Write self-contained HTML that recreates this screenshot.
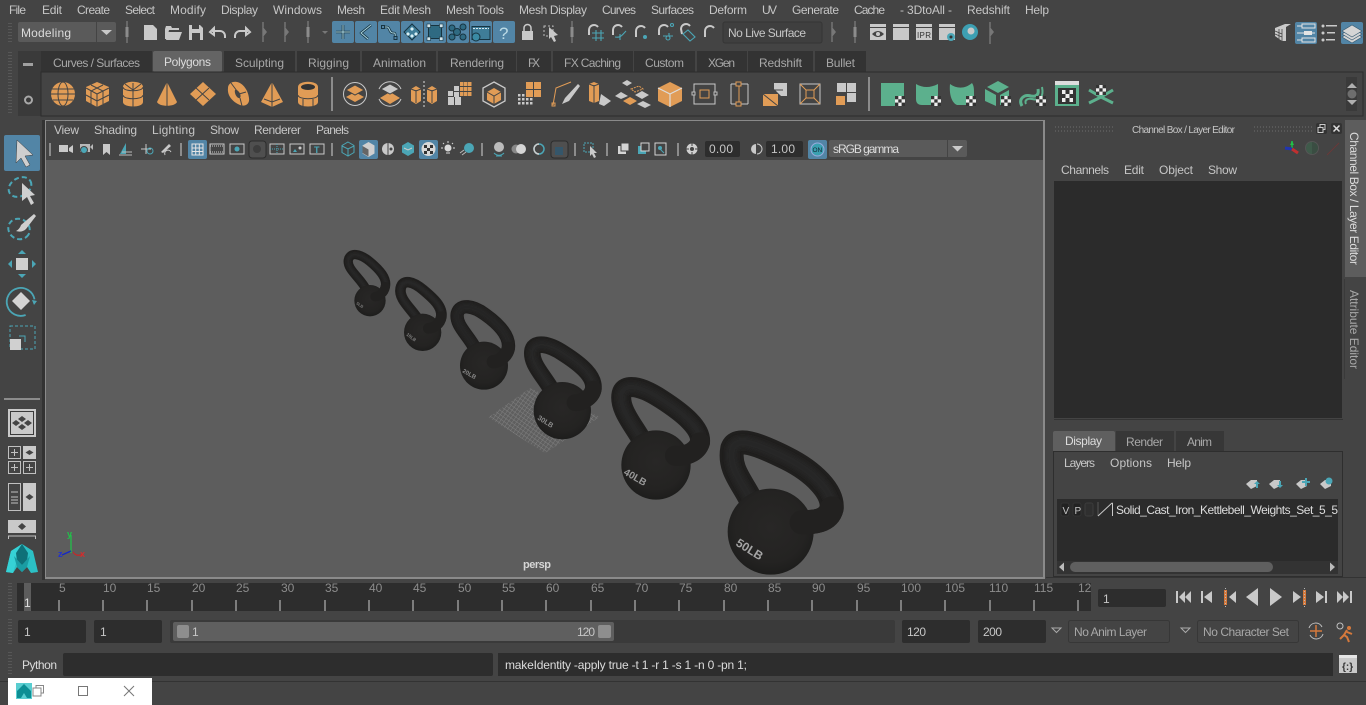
<!DOCTYPE html>
<html><head><meta charset="utf-8"><title>Maya</title>
<style>
html,body{margin:0;padding:0;background:#444;width:1366px;height:705px;overflow:hidden}
svg{display:block}
text{font-family:"Liberation Sans",sans-serif;font-size:12px;fill:#c6c6c6;white-space:pre}
.d{fill:#a8a8a8}
.w{fill:#dcdcdc}
.t{font-size:12px;fill:#8c8c8c}
.o{fill:#e19c56}
.g{fill:#5cb08d}
.l{fill:#c9c9c9}
.ln{fill:none;stroke:#c9c9c9;stroke-width:1.3}
.lo{fill:none;stroke:#444;stroke-width:1}
.b{fill:#5285a6}
.f{fill:#2d2d2d}
</style></head><body>
<svg width="1366" height="705" viewBox="0 0 1366 705" xmlns="http://www.w3.org/2000/svg">
<defs>
<radialGradient id="ball" cx="0.5" cy="0.45" r="0.58"><stop offset="0" stop-color="#282726"/><stop offset="0.7" stop-color="#242322"/><stop offset="1" stop-color="#1c1c1b"/></radialGradient>
<filter id="soft" x="-20%" y="-20%" width="140%" height="140%"><feGaussianBlur stdDeviation="6"/></filter>
<filter id="soft2" x="-30%" y="-30%" width="160%" height="160%"><feGaussianBlur stdDeviation="3"/></filter>
<pattern id="mesh" width="3.500" height="3.500" patternUnits="userSpaceOnUse" patternTransform="rotate(35)"><rect width="3.500" height="3.500" fill="#5f5f5f"/><path d="M0 0H3.500M0 0V3.500" stroke="#7e7e7e" stroke-width="1" fill="none"/></pattern>
<g id="chk"><rect width="10" height="10" fill="#eee"/><rect width="3.3" height="3.3" fill="#333"/><rect x="6.6" width="3.4" height="3.3" fill="#333"/><rect x="3.3" y="3.3" width="3.3" height="3.3" fill="#333"/><rect y="6.6" width="3.3" height="3.4" fill="#333"/><rect x="6.6" y="6.6" width="3.4" height="3.4" fill="#333"/></g>
<g id="grip"><path d="M0 0V22" stroke="#8c8c8c" stroke-width="1"/><rect x="-1.500" y="6" width="3" height="10" fill="#8c8c8c"/></g>
</defs>

<rect width="1366" height="705" fill="#444"/>

<!-- MENU -->
<text x="9" y="14" textLength="17">File</text><text x="42" y="14" textLength="20">Edit</text><text x="77" y="14" textLength="33">Create</text><text x="125" y="14" textLength="30">Select</text><text x="170" y="14" textLength="36">Modify</text><text x="221" y="14" textLength="37">Display</text><text x="273" y="14" textLength="49">Windows</text><text x="337" y="14" textLength="28">Mesh</text><text x="380" y="14" textLength="51">Edit Mesh</text><text x="446" y="14" textLength="58">Mesh Tools</text><text x="519" y="14" textLength="68">Mesh Display</text><text x="602" y="14" textLength="34">Curves</text><text x="651" y="14" textLength="43">Surfaces</text><text x="709" y="14" textLength="38">Deform</text><text x="762" y="14" textLength="15">UV</text><text x="792" y="14" textLength="47">Generate</text><text x="854" y="14" textLength="31">Cache</text><text x="900" y="14" textLength="52">- 3DtoAll -</text><text x="967" y="14" textLength="43">Redshift</text><text x="1025" y="14" textLength="24">Help</text>

<!-- STATUS LINE -->
<path d="M9 23V42M11 23V42" stroke="#6a6a6a" stroke-dasharray="1 2"/>
<rect x="18" y="22" width="98" height="20" rx="2" fill="#5a5a5a"/><rect x="96" y="22" width="1" height="20" fill="#444"/>
<text x="21" y="37" textLength="50" class="w">Modeling</text>
<path d="M101 30h11l-5.500 5z" fill="#c9c9c9"/>
<use href="#grip" x="127" y="21"/>
<path class="l" d="M144 25h9l4 4v11h-13z"/>
<path class="l" d="M165 39v-10l1-3h5l1 2h7v2h-10l-2 9z"/><path class="l" d="M168 32h14l-3 8h-13z"/>
<path class="l" d="M189 25h11l3 3v12h-14z"/><rect x="192" y="25" width="7" height="4" fill="#444"/><rect x="192" y="33" width="8" height="7" fill="#444"/>
<path d="M214 28l-4 4 4 3zM212 31h8a5 5 0 0 1 5 5v2" fill="none" stroke="#c9c9c9" stroke-width="2"/>
<path d="M246 28l4 4-4 3zM248 31h-8a5 5 0 0 0-5 5v2" fill="none" stroke="#c9c9c9" stroke-width="2"/>
<path d="M263 22V42" stroke="#8c8c8c"/><path d="M263 27l4 5-4 5z" fill="#777"/>
<path d="M285 22V42" stroke="#8c8c8c"/><path d="M285 27l4 5-4 5z" fill="#777"/>
<use href="#grip" x="308" y="21"/>
<path d="M322 31h6l-3 3z" fill="#777"/>
<!-- blue selection -->
<g class="b"><rect x="332" y="21" width="22" height="22" rx="2"/><rect x="355" y="21" width="22" height="22" rx="2"/><rect x="378" y="21" width="22" height="22" rx="2"/><rect x="401" y="21" width="22" height="22" rx="2"/><rect x="424" y="21" width="22" height="22" rx="2"/><rect x="447" y="21" width="22" height="22" rx="2"/><rect x="470" y="21" width="22" height="22" rx="2"/><rect x="493" y="21" width="22" height="22" rx="2"/></g>
<g fill="none" stroke="#173441" stroke-width="2.600" stroke-linejoin="round">
<path d="M343 25V39M336 32H350"/><path d="M371 25L361 33L368 39"/><path d="M384 27h3c3 0 2 6 6 6h1c2 0 1 4 1 4"/>
</g>
<g fill="none" stroke="#a8d4e0" stroke-width="1">
<path d="M343 25V39M336 32H350"/><path d="M371 25L361 33L368 39"/><path d="M384 27h3c3 0 2 6 6 6h1c2 0 1 4 1 4"/>
</g>
<g fill="#5285a6" stroke="#173441"><rect x="381.500" y="25.500" width="3" height="3"/><rect x="394" y="36.500" width="3" height="3"/></g>
<path d="M412 24l8 8-8 8-8-8z" fill="#3f7d98" stroke="#173441"/><path d="M412 27l2 2-2 2-2-2zM408 32l2 2-2 2-2-2zM416 32l2 2-2 2-2-2zM412 34l2 2-2 2-2-2z" fill="#d8f0f5"/>
<rect x="428.500" y="25.500" width="13" height="13" fill="#2f6a82" stroke="#173441"/><g fill="#d4e6ec" stroke="#173441" stroke-width=".6"><rect x="427" y="24" width="3.500" height="3.500"/><rect x="439.500" y="24" width="3.500" height="3.500"/><rect x="427" y="37" width="3.500" height="3.500"/><rect x="439.500" y="37" width="3.500" height="3.500"/></g>
<g fill="#2f6a82" stroke="#173441"><circle cx="452" cy="28" r="3"/><circle cx="463" cy="27" r="3"/><circle cx="457" cy="32" r="3.500"/><circle cx="452" cy="37" r="3"/><circle cx="463" cy="37" r="3"/></g>
<rect x="472" y="26.500" width="18" height="13" fill="#3f7d98" stroke="#173441"/><path d="M473 28.500h16" stroke="#d8e8ee" stroke-dasharray="2 1"/><circle cx="476" cy="37" r="4" fill="#3a8aa4" stroke="#173441"/>
<text x="499" y="39" style="font-size:17px;fill:#bcdbe6">?</text>
<path class="l" d="M522 31h11v9h-11z"/><path d="M524 31v-3a3.500 3.500 0 0 1 7 0v3" fill="none" stroke="#c9c9c9" stroke-width="1.500"/>
<path d="M544 26h9v10h-9z" fill="none" stroke="#bbb" stroke-dasharray="2 2"/><path d="M549 27l9 8-4 1 2 5-2 1-3-5-2 2z" fill="#c9c9c9"/>
<use href="#grip" x="572" y="21"/>
<!-- snap -->
<g fill="none" stroke="#c9c9c9" stroke-width="2"><path d="M589 35v-5a5 5 0 0 1 9-3"/><path d="M613 35v-5a5 5 0 0 1 9-3"/><path d="M636 37v-6a5 5 0 0 1 9-3"/><path d="M659 35v-5a5 5 0 0 1 9-3"/><path d="M682 34l-1-5a5 5 0 0 1 9-3"/><path d="M705 37v-6a5 5 0 0 1 9-3"/></g>
<g fill="none" stroke="#4ba6b6" stroke-width="1.100"><path d="M596 30v11M601 30v11M592 33h12M592 38h12"/><path d="M615 37c6 1 7-2 11-6M620 34v6"/><path d="M669 33v3M663 36h10"/><circle cx="668" cy="38" r="2"/><circle cx="672" cy="25" r="1.500"/><path d="M688 30l7 7-5 4-7-7z"/></g>
<circle cx="645" cy="37" r="2" fill="#4ba6b6"/>
<rect x="723" y="22" width="99" height="21" rx="2" fill="#3f3f3f" stroke="#353535"/>
<text x="728" y="37" textLength="78">No Live Surface</text>
<path d="M832 22V42" stroke="#8c8c8c"/><path d="M832 27l4 5-4 5z" fill="#777"/>
<use href="#grip" x="855" y="21"/>
<g class="l"><path d="M870 24h16v3h-16z"/><rect x="870" y="28" width="16" height="12"/><rect x="893" y="28" width="16" height="12"/><path d="M893 24h16v3h-16z"/><rect x="916" y="28" width="16" height="12"/><path d="M916 24h16v3h-16z"/><rect x="939" y="28" width="16" height="12"/><path d="M939 24h16v3h-16z"/></g>
<path d="M872 34q6-6 12 0q-6 6-12 0z" fill="#444"/><circle cx="878" cy="34" r="2" fill="#c9c9c9"/>
<text x="917" y="38" style="font-size:8px;fill:#333" textLength="14">IPR</text>
<circle cx="951" cy="37" r="4" fill="#4ba6b6"/><circle cx="951" cy="37" r="1.500" fill="#333"/>
<circle cx="970" cy="32" r="8" fill="#3d9fb2"/><circle cx="971" cy="31" r="3.500" fill="#c8c8c8"/>
<path d="M990 22V44" stroke="#8c8c8c"/><path d="M990 27l4 5-4 5z" fill="#777"/>
<!-- workspace -->
<path class="l" d="M1275 28l10-4 6 0-5 3v14l-4 0-7-5z"/><path d="M1275 31l7 3M1275 34l7 3M1279 29v10M1282 29v12" stroke="#444" stroke-width=".8"/>
<rect x="1295" y="22" width="22" height="22" rx="2" fill="#5285a6"/>
<g fill="none" stroke="#e4e4e4"><rect x="1302" y="24" width="13" height="4"/><rect x="1302" y="38" width="13" height="4"/><path d="M1297 26h5M1297 33h18M1297 40h5"/></g><rect x="1304" y="31" width="8" height="4" fill="#e4e4e4"/>
<g class="l"><circle cx="1323" cy="26" r="1.500"/><circle cx="1323" cy="33" r="1.500"/><circle cx="1323" cy="40" r="1.500"/><path d="M1326 25h11v1.500h-11zM1327 32h8v1.500h-8zM1326 39h9v1.500h-9z"/></g>
<rect x="1341" y="22" width="22" height="22" rx="2" fill="#5285a6"/>
<g fill="#d5d5d5" stroke="#395c73" stroke-width=".7"><path d="M1352 31l10 6-10 6-10-6z"/><path d="M1352 28l10 6-10 6-10-6z"/><path d="M1352 25l10 6-10 6-10-6z"/></g>

<!-- SHELF -->
<path d="M9 52V115M11 52V115" stroke="#6a6a6a" stroke-dasharray="1 2"/>
<rect x="18" y="51" width="23" height="65" fill="#3a3a3a"/>
<rect x="23" y="63" width="10" height="3" fill="#a0a0a0"/>
<circle cx="28.500" cy="100" r="3.500" fill="none" stroke="#a8a8a8" stroke-width="2"/>
<g fill="#333"><rect x="41" y="51" width="111" height="21"/><rect x="224" y="51" width="71" height="21"/><rect x="297" y="51" width="63" height="21"/><rect x="362" y="51" width="74" height="21"/><rect x="438" y="51" width="78" height="21"/><rect x="517" y="51" width="34" height="21"/><rect x="553" y="51" width="80" height="21"/><rect x="634" y="51" width="61" height="21"/><rect x="697" y="51" width="50" height="21"/><rect x="748" y="51" width="65" height="21"/><rect x="815" y="51" width="51" height="21"/></g>
<rect x="153" y="51" width="69" height="21" rx="2" fill="#646464"/>
<rect x="41" y="72" width="1322" height="44" fill="#444" stroke="#2c2c2c"/>
<text class="d" x="53" y="67" textLength="87">Curves / Surfaces</text><text class="w" x="164" y="66" textLength="47">Polygons</text><text class="d" x="235" y="67" textLength="49">Sculpting</text><text class="d" x="308" y="67" textLength="41">Rigging</text><text class="d" x="373" y="67" textLength="53">Animation</text><text class="d" x="450" y="67" textLength="54">Rendering</text><text class="d" x="528" y="67" textLength="12">FX</text><text class="d" x="564" y="67" textLength="57">FX Caching</text><text class="d" x="645" y="67" textLength="39">Custom</text><text class="d" x="708" y="67" textLength="27">XGen</text><text class="d" x="759" y="67" textLength="43">Redshift</text><text class="d" x="826" y="67" textLength="29">Bullet</text>

<!-- shelf icons -->
<circle class="o" cx="63" cy="94" r="12"/><g class="lo"><ellipse cx="63" cy="94" rx="5" ry="12"/><path d="M52 89h22M51 94h24M53 100h20"/></g>
<path class="o" d="M97 82l12 5v14l-12 6-11-6V87z"/><path class="lo" d="M86 88l11 6 12-6M97 94v13M91 85l12 6v13M103 85l-12 6v13M86 95l11 6 12-6"/>
<path class="o" d="M123 87c0-7 20-7 20 0v15c0 6-20 6-20 0z"/><path class="lo" d="M123 87c0 5 20 5 20 0M123 95c0 5 20 5 20 0M133 90V107M133 83v7M125 84l8 6 8-6"/>
<path class="o" d="M167 82l10 20c-2 5-18 5-20 0z"/><path class="lo" d="M167 82v25"/>
<path class="o" d="M203 82l13 12-13 12-13-12z"/><path class="lo" d="M196 88l13 12M209 88l-13 12" stroke-width="1.500"/>
<path class="o" d="M233 82c7-2 15 6 16 16 1 6-4 9-9 7-7-3-13-9-12-17 0-3 2-5 5-6z"/><path d="M235 90c3-1 7 5 5 8-3 1-6-5-5-8z" fill="#444"/><path class="lo" d="M231 83l6 8M246 92l-7 2M240 98l2 8"/>
<path class="o" d="M272 82l11 20-11 5-11-5z"/><path class="lo" d="M272 82v25M264 99l8 3 8-3"/>
<path class="o" d="M298 87c0-7 20-7 20 0v15c0 6-20 6-20 0z"/><ellipse cx="308" cy="87" rx="7" ry="3" fill="#333"/><path class="lo" d="M298 95c0 5 20 5 20 0M303 99v7M313 99v7"/>
<rect x="331" y="77" width="2" height="34" fill="#8c8c8c"/>
<circle cx="355" cy="94" r="11.500" fill="none" stroke="#c9c9c9"/><path class="o" d="M355 92l9 5-9 5-9-5z"/><path class="o" d="M355 85l9 5-9 5-9-5z" stroke="#444"/>
<path d="M379 89a12 12 0 0 1 22 0M379 99a12 12 0 0 0 22 0" fill="none" stroke="#c9c9c9"/><path class="o" d="M390 92l10 6-10 6-10-6z"/><path class="l" d="M390 84l9 5-9 5-9-5z" stroke="#444"/>
<path class="o" d="M411 89l5-3 5 3v12l-5 3-5-3zM427 89l5-3 5 3v12l-5 3-5-3z"/><path class="lo" d="M416 90v13M432 90v13M411 89l5 2 5-2M427 89l5 2 5-2"/><path d="M424 81V107" stroke="#ddd" stroke-dasharray="2 2"/>
<g class="o"><rect x="460" y="82" width="3.500" height="4"/><rect x="464" y="82" width="3.500" height="4"/><rect x="468" y="82" width="3.500" height="4"/><rect x="460" y="87" width="3.500" height="4"/><rect x="464" y="87" width="3.500" height="4"/><rect x="468" y="87" width="3.500" height="4"/><rect x="460" y="92" width="3.500" height="4"/><rect x="464" y="92" width="3.500" height="4"/><rect x="468" y="92" width="3.500" height="4"/></g><rect x="454" y="86" width="5" height="5" class="l"/><rect x="448" y="91" width="5" height="5" class="l"/><rect x="454" y="92" width="5" height="5" class="l"/><rect x="448" y="97" width="6" height="8" class="l"/><rect x="455" y="97" width="6" height="8" class="l"/>
<path class="ln" d="M494 82l11 6v13l-11 6-11-6V88z"/><path class="o" d="M494 88l7 4v8l-7 4-7-4v-8z"/><path class="lo" d="M487 92l7 4 7-4M494 96v8"/>
<g class="o"><rect x="526" y="82" width="7" height="7"/><rect x="534" y="82" width="7" height="7"/><rect x="526" y="90" width="7" height="7"/><rect x="534" y="90" width="7" height="7"/></g><g class="l"><rect x="518" y="94" width="2.500" height="2.500"/><rect x="522" y="94" width="2.500" height="2.500"/><rect x="518" y="98" width="2.500" height="2.500"/><rect x="522" y="98" width="2.500" height="2.500"/><rect x="518" y="102" width="2.500" height="2.500"/><rect x="522" y="102" width="2.500" height="2.500"/><rect x="526" y="98" width="2.500" height="2.500"/><rect x="530" y="98" width="2.500" height="2.500"/><rect x="526" y="102" width="2.500" height="2.500"/><rect x="530" y="102" width="2.500" height="2.500"/></g>
<path d="M553 105l3-17 15-6" fill="none" stroke="#e19c56"/><rect x="552" y="103" width="3" height="3" fill="none" stroke="#e19c56"/><path class="l" d="M578 84l-13 14-3 6 7-3 11-15z"/>
<path class="o" d="M589 84l5-2 5 2v17l-5 2-5-2z"/><path class="l" d="M601 94l10 7-7 5-5-2z"/><path class="lo" d="M594 85v18M589 84l5 2 5-2"/>
<g class="l"><path d="M627 80l5 3-5 3-5-3zM642 91l7 4-7 4-7-4zM643 101l8 4-6 3-8-4zM621 92l7 4-7 3-6-3z"/></g><path class="o" d="M630 97l7 4-7 4-7-4z"/><path d="M631 89l8-3 4 3-8 3z" fill="none" stroke="#e19c56" stroke-dasharray="2 1"/>
<path class="o" d="M670 82l12 6v13l-12 6-12-6V88z"/><path d="M658 88l12 6 12-6M670 94v13" fill="none" stroke="#ddd" stroke-width="1.200"/>
<rect x="694" y="84" width="21" height="20" fill="none" stroke="#c9c9c9"/><rect x="700" y="90" width="9" height="8" fill="#444" stroke="#e19c56"/><rect x="692" y="92" width="3" height="3" fill="#444" stroke="#bbb"/><rect x="714" y="92" width="3" height="3" fill="#444" stroke="#bbb"/>
<path d="M731 84h17M731 104h17M731 84v20M748 84v20" fill="none" stroke="#c9c9c9"/><path d="M739 84v20" stroke="#e19c56"/><rect x="736" y="82" width="5" height="4" fill="#444" stroke="#e19c56"/><rect x="736" y="102" width="5" height="4" fill="#444" stroke="#e19c56"/>
<path class="l" d="M774 83h13v13h-6l-7-7z"/><path class="o" d="M763 94h15v12h-15z"/><path d="M763 94l15 12M774 90l9 0" stroke="#444"/>
<rect x="800" y="84" width="20" height="20" fill="none" stroke="#c9c9c9"/><path d="M800 84l20 20M820 84l-20 20" stroke="#e19c56"/><rect x="806" y="90" width="8" height="8" fill="#444" stroke="#e19c56"/>
<rect x="837" y="83" width="9" height="9" class="l"/><rect x="847" y="83" width="9" height="9" class="l"/><rect x="847" y="93" width="9" height="9" class="l"/><rect x="836" y="96" width="9" height="9" class="o"/>
<rect x="868" y="77" width="2" height="34" fill="#8c8c8c"/>
<!-- green -->
<rect class="g" x="881" y="83" width="23" height="23"/><use href="#chk" x="895" y="96"/>
<path class="g" d="M916 84c7 4 14 4 22 0v21h-16c-4 0-6-2-6-6z"/><use href="#chk" x="931" y="96"/>
<path class="g" d="M950 84c7 5 15 5 22-1 2 3 2 6 2 10v12h-17c-5-2-8-10-7-21z"/><use href="#chk" x="966" y="96"/>
<path class="g" d="M998 81l11 6-11 6-11-6zM985 89l11 6v11l-11-5zM1000 95l9-5v8h-5v7h-4z"/><use href="#chk" x="1001" y="96"/>
<path d="M1022 106c-4-7 2-12 9-10 6 1 8-2 7-7" fill="none" stroke="#5cb08d" stroke-width="3"/><path d="M1026 104c-2-4 2-6 6-5 8 2 12-2 10-12" fill="none" stroke="#5cb08d" stroke-width="2"/><use href="#chk" x="1036" y="96"/>
<rect x="1055" y="81" width="24" height="25" fill="#5cb08d"/><rect x="1055" y="81" width="24" height="4" fill="#ddd"/><rect x="1058" y="88" width="18" height="16" fill="#333"/><rect x="1062" y="90" width="11" height="12" fill="#eee"/><rect x="1065.500" y="90" width="4" height="4" fill="#333"/><rect x="1062" y="94" width="3.500" height="4" fill="#333"/><rect x="1069.500" y="94" width="3.500" height="4" fill="#333"/><rect x="1065.500" y="98" width="4" height="4" fill="#333"/>
<path d="M1089 90l12 7 12-7M1089 103l12-6 12 6" fill="none" stroke="#5cb08d" stroke-width="3"/><use href="#chk" x="1096" y="85"/>
<!-- shelf scroll -->
<rect x="1346" y="77" width="11" height="34" fill="#3a3a3a"/><path d="M1347 88l5-5 5 5z" fill="#b0b0b0"/><circle cx="1352" cy="94" r="4.500" fill="#6e6e6e"/><path d="M1347 100l5 5 5-5z" fill="#b0b0b0"/>

<!-- LEFT TOOLBOX -->
<rect x="42" y="120" width="3" height="460" fill="#333"/>
<rect x="4" y="135" width="36" height="36" rx="2" fill="#5285a6"/>
<path d="M17 140l16 15-8 1 5 9-4 2-5-9-5 5z" fill="#cfcfcf" stroke="#3a3a3a" stroke-width=".5"/>
<ellipse cx="20" cy="187" rx="12" ry="9" fill="none" stroke="#4ba6b6" stroke-width="2" stroke-dasharray="5 3" transform="rotate(-30 20 187)"/><path d="M22 183l13 12-5 1 4 7-3 2-4-8-5 4z" fill="#cfcfcf"/>
<ellipse cx="19" cy="229" rx="11" ry="10" fill="none" stroke="#4ba6b6" stroke-width="2" stroke-dasharray="5 3" transform="rotate(30 19 229)"/><path d="M34 214l2 2-10 13c-3 3-7 3-10 2 2-1 4-3 5-6z" fill="#cfcfcf"/>
<rect x="16" y="258" width="12" height="12" fill="#cfcfcf"/><path d="M22 250l4 4h-8zM22 278l-4-4h8zM8 264l4-4v8zM36 264l-4-4v8z" fill="#4ba6b6"/>
<path d="M34 297a14 14 0 1 0-6 17" fill="none" stroke="#4ba6b6" stroke-width="1.800" transform="rotate(10 21 301)"/><path d="M21 292l9 9-9 9-9-9z" fill="#d4d4d4"/><path d="M32 300l5 1-3 4z" fill="#4ba6b6"/>
<rect x="10" y="326" width="25" height="23" fill="none" stroke="#4ba6b6" stroke-dasharray="3 2"/><rect x="10" y="339" width="11" height="11" fill="#d0d0d0"/><path d="M19 336h6v6" fill="none" stroke="#4ba6b6"/>
<rect x="4" y="398" width="36" height="2" fill="#8c8c8c"/>
<rect x="8" y="409" width="28" height="28" fill="#c9c9c9"/><rect x="10.500" y="411.500" width="23" height="23" fill="none" stroke="#3a3a3a"/><path d="M22 416l4 3-4 3-4-3zM16 420l4 3-4 3-4-3zM28 420l4 3-4 3-4-3zM22 424l4 3-4 3-4-3z" fill="#444"/>
<g fill="none" stroke="#c0c0c0"><rect x="8.500" y="446.500" width="12" height="12"/><rect x="8.500" y="461.500" width="12" height="12"/><rect x="23.500" y="461.500" width="12" height="12"/><path d="M14.500 449v7M11 452.500h7M14.500 464v7M11 467.500h7M29.500 464v7M26 467.500h7"/></g><rect x="23" y="446" width="13" height="13" fill="#c9c9c9"/><path d="M29.500 450l4 2.500-4 2.500-4-2.500z" fill="#444"/>
<rect x="8.500" y="483.500" width="12" height="27" fill="none" stroke="#c0c0c0"/><path d="M11 492h7M11 497h7M11 500h7M11 503h7" stroke="#c0c0c0"/><rect x="23" y="483" width="13" height="28" fill="#c9c9c9"/><path d="M29.500 494l4 3-4 3-4-3z" fill="#444"/>
<rect x="8" y="520" width="28" height="13" fill="#c9c9c9"/><path d="M22 523l4 3.500-4 3.500-4-3.500z" fill="#444"/><path d="M8.500 539v-3h27v3" fill="none" stroke="#c0c0c0"/>
<!-- maya logo -->
<path d="M22 544L33 551L38 572L31 573L27 567L22 572L17 567L13 573L6 572L11 551Z" fill="#2cc0c5"/>
<path d="M22 544L11 551L6 572L13 573L17 560Z" fill="#36d2d6"/>
<path d="M22 544L28 553L27 561L22 565L17 561L16 553Z" fill="#0f7078"/>
<path d="M14 556L22 565L30 556L27 567L22 572L17 567Z" fill="#1a9ca3"/>

<!-- VIEWPORT -->
<rect x="45" y="120" width="1000" height="459" fill="#8a8a8a"/>
<rect x="46" y="121" width="997" height="39" fill="#444"/>
<rect x="46" y="160" width="997" height="417" fill="#5d5d5d"/>
<text x="54" y="134" textLength="25">View</text><text x="94" y="134" textLength="43">Shading</text><text x="152" y="134" textLength="43">Lighting</text><text x="210" y="134" textLength="29">Show</text><text x="254" y="134" textLength="47">Renderer</text><text x="316" y="134" textLength="33">Panels</text>
<g fill="#8c8c8c"><rect x="49" y="143" width="2" height="13"/><rect x="180" y="143" width="2" height="13"/><rect x="331" y="143" width="2" height="13"/><rect x="481" y="143" width="2" height="13"/><rect x="574" y="143" width="2" height="13"/><rect x="606" y="143" width="2" height="13"/><rect x="677" y="143" width="2" height="13"/></g>
<rect x="59" y="145" width="9" height="7" fill="#c9c9c9"/><path d="M69 148l4-3v8l-4-2z" fill="#c9c9c9"/>
<rect x="80" y="144" width="10" height="8" fill="#b8b8b8"/><circle cx="84" cy="150" r="3.500" fill="#4ba6b6" stroke="#444"/><path d="M90 147l3-3v6z" fill="#b8b8b8"/>
<path d="M103 144h7v11l-3.500-3-3.500 3z" fill="#c9c9c9"/>
<path d="M120 154l6-11v11z" fill="#4ba6b6"/><path d="M119 155h13M122 152h10" stroke="#bbb"/>
<path d="M146 144v10M141 149h10" stroke="#c9c9c9"/><circle cx="150" cy="151" r="3" fill="none" stroke="#4ba6b6"/>
<path d="M161 152l8-8 2 2-8 7z" fill="#c9c9c9"/><path d="M165 155a3 3 0 0 1 6-3" fill="none" stroke="#c9c9c9"/>
<rect x="188" y="140" width="19" height="19" rx="2" fill="#5285a6"/><path d="M192 144h11v11h-11zM192 148h11M192 151.500h11M195.700 144v11M199.300 144v11" fill="none" stroke="#e4e4e4"/>
<rect x="210" y="144" width="14" height="10" fill="none" stroke="#c9c9c9"/><path d="M210 146h14M210 152h14" stroke="#c9c9c9" stroke-dasharray="1 1"/>
<rect x="230" y="144" width="14" height="10" fill="none" stroke="#c9c9c9"/><circle cx="237" cy="149" r="2.500" fill="#4ba6b6"/>
<rect x="249" y="141" width="17" height="17" rx="3" fill="#4f4f4f" stroke="#2c2c2c"/><circle cx="257" cy="149" r="4" fill="#3d3d3d"/>
<rect x="270" y="144" width="14" height="10" fill="none" stroke="#c9c9c9"/><path d="M270 149h14M277 144v10" stroke="#4ba6b6" stroke-dasharray="1 1"/>
<rect x="290" y="144" width="14" height="10" fill="none" stroke="#c9c9c9"/><path d="M293 152l2-3 2 3z" fill="#4ba6b6"/><circle cx="300" cy="148" r="1.500" fill="#c9c9c9"/>
<rect x="310" y="144" width="14" height="10" fill="none" stroke="#c9c9c9"/><text x="314" y="153" style="font-size:9px;font-weight:bold;fill:#4ba6b6">T</text>
<path d="M348 142l6 3.500v7l-6 3.500-6-3.500v-7z" fill="none" stroke="#4ba6b6"/><path d="M342 146l6 3 6-3M348 149v7" stroke="#4ba6b6" fill="none"/>
<rect x="359" y="140" width="19" height="19" rx="2" fill="#5285a6"/><path d="M368.500 142l6 3.500v8l-6 3.500-6-3.500v-8z" fill="#cfcfcf"/><path d="M362.500 146l6 3.500v7l-6-3.500z" fill="#666"/>
<circle cx="388" cy="149" r="6" fill="#c9c9c9"/><path d="M388 143v12" stroke="#444"/><circle cx="391" cy="149" r="1.500" fill="#444"/>
<path d="M408 142l6 3.500v7l-6 3.500-6-3.500v-7z" fill="#4ba6b6"/><path d="M404 148l4 2 4-2" stroke="#ccc" fill="none"/>
<rect x="419" y="140" width="19" height="19" rx="2" fill="#5285a6"/><circle cx="428.500" cy="149" r="7" fill="#d8d8d8"/><path d="M424 145h3v3h-3zM430 145h3v3h-3zM427 148h3v3h-3zM424 151h3v3h-3zM430 151h3v3h-3z" fill="#333"/>
<circle cx="448" cy="148" r="3.500" fill="#d8d8d8"/><path d="M448 141v2M441 148h2M453 148h2M443 143l1 1M453 143l-1 1M446 153h4" stroke="#d8d8d8"/>
<circle cx="469" cy="148" r="5" fill="#4ba6b6"/><path d="M460 153l4-3M462 155l4-3" stroke="#bbb"/>
<circle cx="499" cy="147" r="5" fill="#bcbcbc"/><path d="M494 153c3 3 7 3 10 0M496 156h6" stroke="#4ba6b6" fill="none"/>
<circle cx="516" cy="149" r="4.500" fill="#888"/><circle cx="521" cy="149" r="5" fill="#d5d5d5"/>
<circle cx="539" cy="149" r="5" fill="none" stroke="#4ba6b6" stroke-width="1.500"/><path d="M539 144a5 5 0 0 0 0 10" fill="none" stroke="#ccc" stroke-width="1.500"/>
<rect x="551" y="141" width="17" height="17" rx="3" fill="#4f4f4f" stroke="#2c2c2c"/><rect x="555" y="147" width="8" height="8" fill="#35566a"/>
<rect x="584" y="143" width="9" height="9" fill="none" stroke="#4ba6b6" stroke-dasharray="2 1"/><path d="M590 146l7 7-3 0 2 4-2 1-2-4-2 2z" fill="#c9c9c9"/>
<rect x="618" y="146" width="8" height="8" fill="#d5d5d5"/><rect x="621" y="143" width="8" height="8" fill="#d5d5d5" stroke="#444"/>
<rect x="638" y="146" width="8" height="8" fill="#4ba6b6"/><rect x="641" y="143" width="8" height="8" fill="#444" stroke="#d5d5d5"/>
<rect x="655" y="143" width="11" height="12" fill="none" stroke="#d5d5d5"/><circle cx="660" cy="148" r="2" fill="#4ba6b6"/><path d="M660 149l4 4" stroke="#4ba6b6"/>
<circle cx="692" cy="149" r="5.500" fill="#d0d0d0"/><circle cx="692" cy="149" r="2" fill="#444"/><path d="M692 143v3M698 149h-3M692 155v-3M686 149h3" stroke="#444"/>
<rect x="705" y="141" width="35" height="16" rx="2" fill="#2d2d2d"/><text x="709" y="153" textLength="24">0.00</text>
<path d="M756 144a5 5 0 0 0 0 10z" fill="#c9c9c9"/><path d="M757 144a5 5 0 0 1 0 10" fill="none" stroke="#c9c9c9"/>
<rect x="766" y="141" width="37" height="16" rx="2" fill="#2d2d2d"/><text x="771" y="153" textLength="24">1.00</text>
<rect x="808" y="140" width="19" height="19" rx="2" fill="#5285a6"/><circle cx="817.500" cy="149.500" r="6.500" fill="#3aa0b0" stroke="#9ad"/><text x="812.500" y="152" style="font-size:6.500px;fill:#123">ON</text>
<rect x="829" y="140" width="138" height="17" rx="2" fill="#5a5a5a"/><rect x="947" y="140" width="1" height="17" fill="#444"/>
<text x="833" y="153" textLength="66" class="w">sRGB gamma</text><path d="M952 146h11l-5.500 5.500z" fill="#c9c9c9"/>

<!-- grid plane -->
<polygon points="488.300,417.300 530,388.300 600,416.700 545,453.300" fill="url(#mesh)"/>

<!-- kettlebells -->
<g transform="translate(330 235) scale(.3333)" fill="none" stroke-linecap="round" stroke-linejoin="round">
<path stroke="#201f1e" stroke-width="28" d="M112 170C95 130 50 105 55 75C60 50 90 55 120 80C150 105 172 130 166 155C162 175 145 185 135 185"/>
<path stroke="#272625" stroke-width="12" filter="url(#soft2)" d="M112 170C95 130 50 105 55 75C60 50 90 55 120 80C150 105 172 130 166 155"/>
<circle cx="120" cy="197" r="47" fill="url(#ball)"/>
<path stroke="#222120" stroke-width="28" d="M166 155C162 175 145 185 135 185"/>
<path stroke="#201f1e" stroke-width="32" d="M268 260C250 225 205 195 212 160C218 130 250 140 280 165C310 190 338 215 334 245C330 268 310 280 295 280"/>
<path stroke="#272625" stroke-width="14" filter="url(#soft2)" d="M268 260C250 225 205 195 212 160C218 130 250 140 280 165C310 190 338 215 334 245"/>
<circle cx="278" cy="292" r="56" fill="url(#ball)"/>
<path stroke="#222120" stroke-width="32" d="M334 245C330 268 310 280 295 280"/>
<path stroke="#201f1e" stroke-width="40" d="M435 340C415 300 375 270 382 235C390 205 430 212 465 238C510 270 540 305 535 340C530 365 505 380 490 380"/>
<path stroke="#272625" stroke-width="18" filter="url(#soft)" d="M435 340C415 300 375 270 382 235C390 205 430 212 465 238C510 270 540 305 535 340"/>
<circle cx="462" cy="392" r="72" fill="url(#ball)"/>
<path stroke="#222120" stroke-width="40" d="M535 340C530 365 505 380 490 380"/>
<path stroke="#201f1e" stroke-width="50" d="M665 465C640 420 600 385 608 345C615 320 655 325 700 355C755 390 795 425 790 462C785 490 750 505 735 503"/>
<path stroke="#272625" stroke-width="22" filter="url(#soft)" d="M665 465C640 420 600 385 608 345C615 320 655 325 700 355C755 390 795 425 790 462"/>
<circle cx="697" cy="527" r="86" fill="url(#ball)"/>
<path stroke="#222120" stroke-width="50" d="M790 462C785 490 750 505 735 503"/>
</g>
<g transform="translate(600 365) scale(.3333)" fill="none" stroke-linecap="round" stroke-linejoin="round">
<path stroke="#201f1e" stroke-width="60" d="M125 225C100 180 55 130 65 85C72 55 120 60 185 103C250 145 305 190 300 232C290 265 250 275 225 272"/>
<path stroke="#272625" stroke-width="28" filter="url(#soft)" d="M125 225C100 180 55 130 65 85C72 55 120 60 185 103C250 145 305 190 300 232"/>
<circle cx="168" cy="300" r="104" fill="url(#ball)"/>
<path stroke="#222120" stroke-width="60" d="M300 232C290 265 250 275 225 272"/>
<path stroke="#201f1e" stroke-width="72" d="M450 400C425 350 385 310 397 250C410 215 470 235 560 280C640 320 700 380 695 430C685 470 640 472 605 472"/>
<path stroke="#272625" stroke-width="34" filter="url(#soft)" d="M450 400C425 350 385 310 397 250C410 215 470 235 560 280C640 320 700 380 695 430"/>
<circle cx="512" cy="500" r="129" fill="url(#ball)"/>
<path stroke="#222120" stroke-width="72" d="M695 430C685 470 640 472 605 472"/>
</g>
<text transform="translate(356 304) rotate(35)" style="font-size:4px;font-weight:bold;fill:#777">5LB</text>
<text transform="translate(406 335) rotate(38)" style="font-size:4.500px;font-weight:bold;fill:#808080">10LB</text>
<text transform="translate(462 372) rotate(30)" style="font-size:6px;font-weight:bold;fill:#888">20LB</text>
<text transform="translate(537 419) rotate(32)" style="font-size:7px;font-weight:bold;fill:#8a8a8a">30LB</text>
<text transform="translate(623 474) rotate(30)" style="font-size:10px;font-weight:bold;fill:#999">40LB</text>
<text transform="translate(735 545) rotate(32)" style="font-size:12px;font-weight:bold;fill:#a5a5a5">50LB</text>
<text x="523" y="568" style="font-size:11px;font-weight:bold;fill:#d6d6d6" textLength="28">persp</text>
<!-- axes -->
<path d="M71 553V535" stroke="#22c04a" stroke-width="1.300"/><path d="M71 551l-9 4" stroke="#1428c8" stroke-width="1.300"/><path d="M73 552c3 4 6 4 10 2" fill="none" stroke="#c02a2a" stroke-width="1.300"/>
<text x="67" y="537" style="font-size:9px;font-weight:bold;fill:#22c04a">y</text><text x="58" y="557" style="font-size:9px;font-weight:bold;fill:#2030d0">z</text><text x="80" y="557" style="font-size:9px;font-weight:bold;fill:#d03030">x</text>

<!-- RIGHT PANEL -->
<path d="M1055 127h59M1055 131h59M1254 127h59M1254 131h59" stroke="#6e6e6e" stroke-dasharray="1 2"/>
<text x="1132" y="133" textLength="103" style="font-size:10px">Channel Box / Layer Editor</text>
<rect x="1316" y="123" width="11" height="11" rx="2" fill="#333"/><rect x="1320" y="124.500" width="5" height="5" fill="none" stroke="#ccc"/><rect x="1318" y="127.500" width="5" height="5" fill="#333" stroke="#ccc"/>
<rect x="1331" y="123" width="11" height="11" rx="2" fill="#333"/><path d="M1333.500 125.500l6 6M1339.500 125.500l-6 6" stroke="#ddd" stroke-width="1.500"/>
<path d="M1292 148v-7" stroke="#22a044" stroke-width="2"/><path d="M1292 141l-2 4h4z" fill="#22c04a"/><path d="M1292 149l-7 -1" stroke="#2035b0" stroke-width="3"/><path d="M1292 149l6 4" stroke="#c03030" stroke-width="3"/>
<circle cx="1312" cy="148" r="6.500" fill="#3f5a4a" stroke="#555"/><path d="M1312 142a6 6 0 0 1 0 12z" fill="#3a4d42"/>
<path d="M1327 155l12-12" stroke="#6a3a3a"/>
<text x="1061" y="174" textLength="48">Channels</text><text x="1124" y="174" textLength="20">Edit</text><text x="1159" y="174" textLength="34">Object</text><text x="1208" y="174" textLength="29">Show</text>
<rect x="1054" y="181" width="288" height="237" fill="#2b2b2b"/>
<rect x="1054" y="419" width="289" height="1" fill="#333"/>
<rect x="1345" y="120" width="21" height="157" fill="#5d5d5d"/>
<text transform="translate(1350 132) rotate(90)" textLength="133" class="w">Channel Box / Layer Editor</text>
<text transform="translate(1350 290) rotate(90)" textLength="79" class="d">Attribute Editor</text>
<rect x="1344" y="279" width="1" height="100" fill="#3a3a3a"/>
<rect x="1053" y="431" width="62" height="21" rx="2" fill="#5f5f5f"/><rect x="1116" y="431" width="58" height="21" fill="#373737"/><rect x="1176" y="431" width="48" height="21" fill="#373737"/>
<text x="1065" y="445" textLength="37" class="w">Display</text><text x="1126" y="446" textLength="37" class="d">Render</text><text x="1187" y="446" textLength="25" class="d">Anim</text>
<rect x="1053.500" y="451.500" width="289" height="125" fill="none" stroke="#2e2e2e"/>
<text x="1064" y="467" textLength="31">Layers</text><text x="1110" y="467" textLength="42">Options</text><text x="1167" y="467" textLength="24">Help</text>
<g fill="#c9c9c9"><path d="M1246 484l5-4h6v6l-6 3z"/><path d="M1269 484l5-4h6v6l-6 3z"/><path d="M1296 484l5-4h6v6l-6 3z"/><path d="M1320 484l5-4h6v6l-6 3z"/></g>
<g fill="#4ba6b6"><path d="M1257 481l3 3h-2v4h-2v-4h-2z"/><path d="M1280 488l3-3h-2v-4h-2v4h-2z"/><path d="M1305 478h2v3h3v2h-3v3h-2v-3h-3v-2h3z"/><circle cx="1329" cy="481" r="3.500"/></g>
<rect x="1057" y="499" width="281" height="75" fill="#2b2b2b"/>
<rect x="1061" y="503" width="8" height="13" rx="2" fill="#222" stroke="#333"/><rect x="1073" y="503" width="8" height="13" rx="2" fill="#222" stroke="#333"/><rect x="1085" y="503" width="8" height="13" rx="2" fill="#2f2f2f" stroke="#3c3c3c"/>
<text x="1062.500" y="514" style="font-size:10px">V</text><text x="1074.500" y="514" style="font-size:10px">P</text>
<path d="M1098 502v14M1112.500 502v14" stroke="#555"/><path d="M1098 516l14-13" stroke="#c9c9c9"/><path d="M1112.500 503v13" stroke="#c9c9c9"/>
<text x="1116" y="514" textLength="222" class="w">Solid_Cast_Iron_Kettlebell_Weights_Set_5_5</text>
<rect x="1057" y="561" width="281" height="13" fill="#333"/>
<rect x="1070" y="562" width="203" height="10" rx="5" fill="#5f5f5f"/>
<path d="M1059 567l5-4.500v9z" fill="#bbb"/><path d="M1335 567l-5-4.500v9z" fill="#bbb"/>
<rect x="1046" y="577" width="320" height="1" fill="#333"/>

<!-- TIMELINE -->
<path d="M9 583V612M11 583V612M9 619V644M11 619V644M9 652V676M11 652V676" stroke="#6a6a6a" stroke-dasharray="1 2"/>
<rect x="17" y="583" width="1074" height="28" fill="#2d2d2d"/>
<rect x="24" y="583" width="7" height="28" fill="#5d5d5d"/>
<text x="24" y="607" style="font-size:12px;fill:#e0e0e0">1</text>
<g fill="#7d7d7d"><rect x="58" y="600" width="2" height="11"/><rect x="102" y="600" width="2" height="11"/><rect x="146" y="600" width="2" height="11"/><rect x="191" y="600" width="2" height="11"/><rect x="235" y="600" width="2" height="11"/><rect x="279" y="600" width="2" height="11"/><rect x="324" y="600" width="2" height="11"/><rect x="368" y="600" width="2" height="11"/><rect x="412" y="600" width="2" height="11"/><rect x="457" y="600" width="2" height="11"/><rect x="501" y="600" width="2" height="11"/><rect x="545" y="600" width="2" height="11"/><rect x="590" y="600" width="2" height="11"/><rect x="634" y="600" width="2" height="11"/><rect x="678" y="600" width="2" height="11"/><rect x="723" y="600" width="2" height="11"/><rect x="767" y="600" width="2" height="11"/><rect x="811" y="600" width="2" height="11"/><rect x="856" y="600" width="2" height="11"/><rect x="900" y="600" width="2" height="11"/><rect x="944" y="600" width="2" height="11"/><rect x="989" y="600" width="2" height="11"/><rect x="1033" y="600" width="2" height="11"/><rect x="1077" y="600" width="2" height="11"/></g>
<text class="t" x="59" y="592">5</text><text class="t" x="103" y="592">10</text><text class="t" x="147" y="592">15</text><text class="t" x="192" y="592">20</text><text class="t" x="236" y="592">25</text><text class="t" x="281" y="592">30</text><text class="t" x="325" y="592">35</text><text class="t" x="369" y="592">40</text><text class="t" x="413" y="592">45</text><text class="t" x="458" y="592">50</text><text class="t" x="502" y="592">55</text><text class="t" x="546" y="592">60</text><text class="t" x="591" y="592">65</text><text class="t" x="635" y="592">70</text><text class="t" x="679" y="592">75</text><text class="t" x="724" y="592">80</text><text class="t" x="768" y="592">85</text><text class="t" x="812" y="592">90</text><text class="t" x="857" y="592">95</text><text class="t" x="901" y="592">100</text><text class="t" x="945" y="592">105</text><text class="t" x="989" y="592">110</text><text class="t" x="1034" y="592">115</text><text class="t" x="1078" y="592">12</text>
<rect x="1091" y="583" width="5" height="28" fill="#444"/>
<rect x="1098" y="589" width="68" height="18" rx="2" class="f"/><text x="1103" y="603">1</text>
<!-- playback -->
<g fill="#c9c9c9">
<path d="M1176 591v12h2v-12zM1179 597l6-6v12zM1185 597l6-6v12z"/>
<path d="M1201 591v12h2v-12zM1204 597l8-6v12z"/>
<path d="M1229 597l7-6v12z"/>
<path d="M1246 597l12-9v18z"/>
<path d="M1270 588v18l12-9z"/>
<path d="M1293 591v12l8-6z"/>
<path d="M1316 591v12l8-6zM1325 591v12h2v-12z"/>
<path d="M1337 591v12l6-6zM1343 591v12l6-6zM1350 591v12h2v-12z"/>
</g>
<rect x="1224" y="590" width="3" height="15" fill="#d5793c"/><path d="M1225.500 588v20" stroke="#bbb" stroke-dasharray="1 2"/><rect x="1303" y="590" width="3" height="15" fill="#d5793c"/><path d="M1304.500 588v20" stroke="#bbb" stroke-dasharray="1 2"/>

<!-- RANGE -->
<rect x="18" y="620" width="68" height="23" rx="2" class="f"/><rect x="94" y="620" width="68" height="23" rx="2" class="f"/>
<text x="24" y="636">1</text><text x="100" y="636">1</text>
<rect x="170" y="620" width="725" height="23" rx="2" fill="#3a3a3a"/>
<rect x="173" y="622" width="441" height="19" rx="2" fill="#5f5f5f"/>
<rect x="177" y="625" width="12" height="13" rx="2" fill="#8e8e8e"/><rect x="598" y="625" width="13" height="13" rx="2" fill="#8e8e8e"/>
<text x="192" y="636">1</text><text x="577" y="636" textLength="18">120</text>
<rect x="902" y="620" width="68" height="23" rx="2" class="f"/><rect x="978" y="620" width="68" height="23" rx="2" class="f"/>
<text x="907" y="636" textLength="19">120</text><text x="983" y="636" textLength="19">200</text>
<path d="M1052 628h9l-4.500 4.500z" fill="none" stroke="#aaa"/><path d="M1181 628h9l-4.500 4.500z" fill="none" stroke="#aaa"/>
<rect x="1068.500" y="620.500" width="101" height="22" rx="2" fill="none" stroke="#373737"/><rect x="1197.500" y="620.500" width="101" height="22" rx="2" fill="none" stroke="#373737"/>
<text x="1074" y="636" textLength="73" class="d">No Anim Layer</text><text x="1203" y="636" textLength="86" class="d">No Character Set</text>
<path d="M1309 628a7 7 0 0 1 13-1M1323 634a7 7 0 0 1-13 1" fill="none" stroke="#c0c0c0"/><path d="M1316 625v12M1310 631h12" stroke="#d5793c" stroke-width="1.500"/>
<circle cx="1340" cy="626" r="3" fill="none" stroke="#c0c0c0"/><circle cx="1349" cy="628" r="2" fill="#d5793c"/><path d="M1347 630l-3 5 3 2 2 5M1344 635l-4 4M1347 632l5 2" stroke="#d5793c" stroke-width="2" fill="none"/>

<!-- COMMAND -->
<text x="22" y="669" textLength="35" class="w">Python</text>
<rect x="63" y="653" width="430" height="23" rx="2" class="f"/>
<rect x="498" y="653" width="835" height="23" fill="#2d2d2d"/>
<text x="505" y="669" textLength="242" class="w">makeIdentity -apply true -t 1 -r 1 -s 1 -n 0 -pn 1;</text>
<rect x="1339" y="655" width="18" height="18" fill="#c9c9c9"/><rect x="1339" y="655" width="18" height="3" fill="#e5e5e5"/><text x="1342" y="670" style="font-size:10px;font-weight:bold;fill:#333">{:}</text>
<rect x="0" y="678" width="1366" height="27" fill="#444"/><rect x="0" y="681" width="8" height="1" fill="#333"/><rect x="152" y="681" width="1214" height="1" fill="#333"/>

<!-- WINDOW CHROME -->
<rect x="8" y="678" width="144" height="27" fill="#fff"/>
<rect x="16" y="683" width="16" height="16" fill="#59cdd0"/><path d="M24 684l7 7v7h-4l-3-5-3 5h-4v-7z" fill="#0d8e94"/>
<rect x="33" y="688" width="8" height="8" fill="none" stroke="#888"/><path d="M36 688v-2.500h7.500v7.500h-2.500" fill="none" stroke="#888"/>
<rect x="78.500" y="686.500" width="9" height="9" fill="none" stroke="#777"/>
<path d="M124 686l10 10M134 686l-10 10" stroke="#777"/>
</svg>
</body></html>
